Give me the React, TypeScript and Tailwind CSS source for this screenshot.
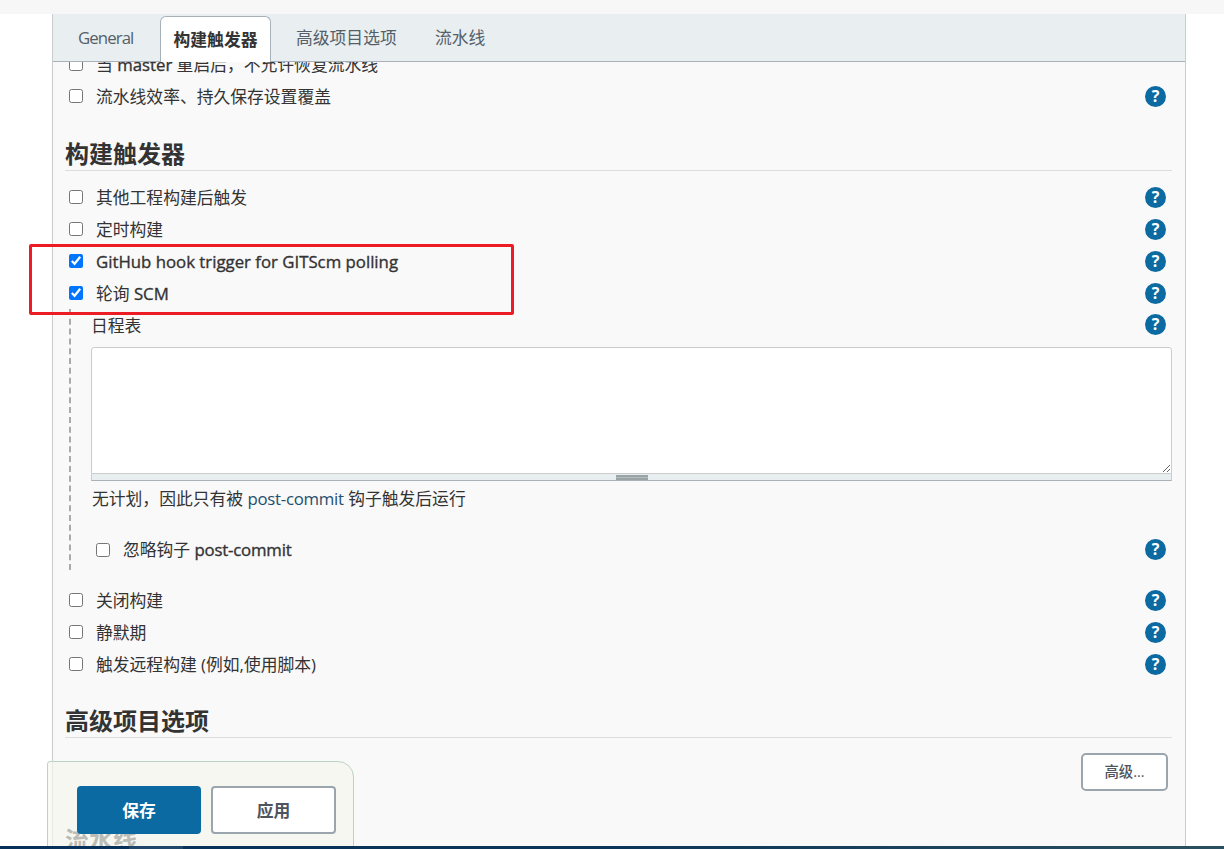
import React from "react";

const font = { fontFamily: '"Open Sans", "Noto Sans CJK SC", sans-serif' };

function Help({ up }: { up?: boolean }) {
  return (
    <span className={`flex h-[21px] w-[21px] shrink-0 items-center justify-center rounded-full bg-[#0b6aa2] text-[16px] font-bold leading-none text-white ${up ? "-mt-[2px]" : ""}`}>
      ?
    </span>
  );
}

function Row({ label, checked, noHelp }: { label: React.ReactNode; checked?: boolean; noHelp?: boolean }) {
  return (
    <div className="flex h-8 items-center pl-[4px] pr-[19px]">
      <input type="checkbox" defaultChecked={checked} className="-mt-[1px] h-[14px] w-[14px] shrink-0 accent-[#0075ff]" />
      <span className="ml-[13px] mt-[2px] flex-1 text-[16.8px] leading-[30px] text-[#333]">{label}</span>
      {noHelp ? null : <Help />}
    </div>
  );
}

function Heading({ children }: { children: React.ReactNode }) {
  return (
    <div className="mr-[13px] border-b border-[#ddd] text-[24px] font-bold leading-[33px] text-[#333]">{children}</div>
  );
}

export default function App() {
  return (
    <div style={font} className="relative h-[849px] w-[1224px] overflow-hidden bg-white">
      <div className="h-[14px] bg-[#f7f7f7]" />
      <div className="ml-[52px] flex h-[835px] w-[1134px] flex-col border-x border-[#ccc] bg-[#f9f9f9]">
        <div className="relative z-10 flex h-[48px] shrink-0 items-end border-b border-[#a6b1b9] bg-[#e9eef1] pl-[8px] text-[16.8px] text-[#555f68]">
          <div className="flex h-[46px] w-[99px] items-center whitespace-nowrap pl-[17px] tracking-[-0.9px]">General</div>
          <div className="relative top-[1px] flex h-[46px] w-[111px] items-center justify-center whitespace-nowrap rounded-t-[6px] border border-b-0 border-[#a6b1b9] bg-white font-bold text-[#333]">
            构建触发器
          </div>
          <div className="flex h-[46px] w-[139px] items-center whitespace-nowrap pl-[25px]">高级项目选项</div>
          <div className="flex h-[46px] w-[90px] items-center whitespace-nowrap pl-[25px]">流水线</div>
        </div>

        <div className="min-h-0 flex-1 pl-[12px]">
          <div className="mt-[-14px]">
            <Row label={<>当 <span className="[-webkit-text-stroke:0.35px_#333]">master</span> 重启后，不允许恢复流水线</>} noHelp />
            <Row label="流水线效率、持久保存设置覆盖" />
          </div>
          <div className="mt-[25px]">
            <Heading>构建触发器</Heading>
          </div>
          <div className="mt-[10px]">
            <Row label="其他工程构建后触发" />
            <Row label="定时构建" />
            <Row label={<span className="[-webkit-text-stroke:0.35px_#333]">GitHub hook trigger for GITScm polling</span>} checked />
            <Row label={<>轮询 <span className="[-webkit-text-stroke:0.35px_#333]">SCM</span></>} checked />
          </div>
          <div className="ml-[4px] h-[261px] border-l-2 border-dashed border-[#aaa] pl-[20px]">
            <div className="flex h-[32px] items-center pr-[19px]">
              <span className="mt-[2px] flex-1 text-[16.8px] text-[#333]">日程表</span>
              <Help up />
            </div>
            <div className="mr-[13px] mt-[6px]">
              <textarea className="block h-[127px] w-full resize-y rounded-t-[3px] border border-[#ccc] bg-white outline-none" />
              <div className="flex h-[7px] items-center justify-center border-b border-[#a6b1b9] border-x border-x-[#ccc] bg-[#e9eef1]">
                <div className="h-[5px] w-[32px] border-y-2 border-[#9aa3a5] bg-[#b5bcbe]" />
              </div>
            </div>
            <div className="ml-[1px] mt-[6px] h-[24px] text-[16.8px] leading-[24px] text-[#333]">
              无计划，因此只有被 <span className="tracking-[-0.25px] text-[#1f4e6e]">post-commit</span> 钩子触发后运行
            </div>
            <div className="mt-[23px] flex h-[32px] items-center pl-[5px] pr-[19px]">
              <input type="checkbox" className="h-[14px] w-[14px] shrink-0 accent-[#0075ff]" />
              <span className="ml-[13px] flex-1 text-[16.8px] text-[#333]">忽略钩子 <span className="tracking-[-0.2px] [-webkit-text-stroke:0.35px_#333]">post-commit</span></span>
              <Help up />
            </div>
          </div>
          <div className="mt-[14px]">
            <Row label="关闭构建" />
            <Row label="静默期" />
            <Row label="触发远程构建 (例如,使用脚本)" />
          </div>
          <div className="mt-[24px]">
            <Heading>高级项目选项</Heading>
          </div>
          <div className="mt-[15px] flex justify-end pr-[17px]">
            <button className="h-[38px] w-[87px] rounded-[5px] border-2 border-[#9aa5ad] bg-white text-[14.4px] font-medium text-[#4d545d]">
              高级...
            </button>
          </div>
          <div className="mt-[32px] text-[24px] font-bold leading-[33px] text-[#333]">流水线</div>
        </div>
      </div>

      <div className="absolute left-[29px] top-[244px] h-[71px] w-[485px] rounded-[2px] border-[3px] border-[#ed1c24]" />

      <div className="absolute left-[47px] top-[761px] flex h-[88px] w-[307px] items-start gap-[10px] rounded-tr-[16px] rounded-tl-[3px] border border-[#bcd4c4] bg-[#f5f6ee]/70 pl-[29px] pt-[24px]">
        <button className="h-[48px] w-[124px] rounded-[4px] bg-[#0b6aa2] pt-[2px] text-[16.8px] font-bold text-white">保存</button>
        <button className="h-[48px] w-[125px] rounded-[4px] border-2 border-[#9aa5ad] bg-white pt-[2px] text-[16.8px] font-bold text-[#4d545d]">应用</button>
      </div>

      <div className="absolute bottom-0 left-0 h-[3px] w-full bg-gradient-to-r from-[#06305a] via-[#0b3558] to-[#2a5060] pl-[129px]">
        <div className="h-full w-[54px] bg-white/10" />
      </div>
    </div>
  );
}
